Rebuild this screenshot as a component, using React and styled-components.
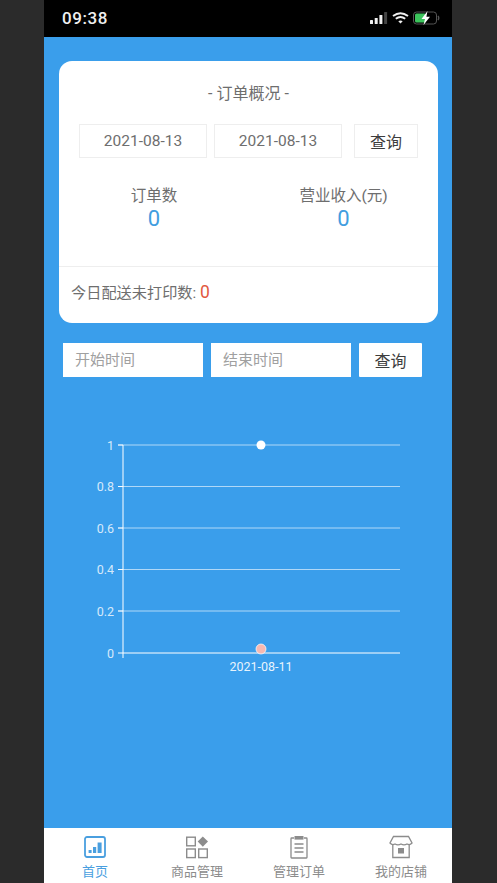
import React from "react";
import styled, { createGlobalStyle } from "styled-components";

const Global = createGlobalStyle`
  html, body { margin: 0; padding: 0; background: #2b2b2b; }
  body { font-family: Roboto, "Noto Sans CJK SC", sans-serif; }
  * { box-sizing: border-box; }
`;
const Stage = styled.div`
  width: 497px; height: 883px; background: #2b2b2b; overflow: hidden;
  display: flex; justify-content: center; padding-right: 1px;
`;
const Phone = styled.div`
  width: 408px; height: 883px; display: flex; flex-direction: column; background: #3a9eeb;
`;
const StatusBar = styled.div`
  height: 37px; background: #000; color: #f0f0f0; flex: none;
  display: flex; align-items: center; justify-content: space-between;
  padding: 0 12px 1px 18px;
`;
const Clock = styled.span`
  font-size: 17px; font-weight: 500; letter-spacing: 0.6px;
`;
const StatusIcons = styled.div`
  display: flex; align-items: center; gap: 4px;
`;
const Main = styled.main`
  flex: 1; padding: 24px 14px 0 15px; display: flex; flex-direction: column;
`;
const Card = styled.section`
  width: 379px; height: 262px; background: #fff; border-radius: 13px;
  display: flex; flex-direction: column;
`;
const Title = styled.h2`
  margin: 0; padding-top: 22px; height: 63px; text-align: center;
  font-size: 16px; line-height: 22px; font-weight: 400; color: #6e6e6e;
`;
const DateRow = styled.div`
  display: flex; padding-left: 20px;
`;
const DateBox = styled.div`
  width: 128px; height: 34px; border: 1px solid #eee; margin-right: 7px;
  display: flex; align-items: center; justify-content: center;
  font-size: 15.5px; color: #6e6e6e;
`;
const CardButton = styled.div`
  width: 64px; height: 34px; border: 1px solid #eee; margin-left: 5px; padding-bottom: 1px;
  display: flex; align-items: center; justify-content: center;
  font-size: 16px; color: #3d3d3d;
`;
const Stats = styled.div`
  display: grid; grid-template-columns: 190px 189px; padding-top: 27px; height: 108px;
`;
const Stat = styled.div`
  display: flex; flex-direction: column; align-items: center;
  font-size: 15.5px; line-height: 22px; color: #6e6e6e;
`;
const StatValue = styled.span`
  font-size: 22px; line-height: 23px; color: #419ddf;
`;
const Footer = styled.div`
  border-top: 1px solid #eee; flex: 1; padding: 14px 0 0 12px;
  font-size: 15.2px; line-height: 22px; color: #6e6e6e;
`;
const Alert = styled.span`
  font-size: 17.5px; color: #e2583e;
`;
const QueryRow = styled.div`
  display: flex; margin-top: 20px; padding-left: 4px;
`;
const TimeField = styled.div`
  width: 140px; height: 34px; background: #fff; margin-right: 8px; padding: 0 0 4px 12px;
  display: flex; align-items: center; font-size: 15px; color: #a0a0a0;
`;
const QueryButton = styled.div`
  width: 63px; height: 34px; background: #fff; border-radius: 1px;
  display: flex; align-items: center; justify-content: center;
  font-size: 16px; color: #3d3d3d;
`;
const Chart = styled.svg`
  display: block; margin: 49.5px 0 0 -15px; flex: none;
`;
const TabBar = styled.nav`
  height: 55px; flex: none; background: #fff; display: grid; grid-template-columns: repeat(4, 102px);
`;
const Tab = styled.div`
  display: flex; flex-direction: column; align-items: center; padding-top: 7px;
  color: ${p => (p.$active ? "#4a9fdf" : "#8c8c8c")};
  font-size: 13px; line-height: 18px;
`;
const TabIcon = styled.svg`
  display: block; margin-bottom: 4px; flex: none;
`;

const HomeIcon = () => (
  <TabIcon width="24" height="24" viewBox="0 0 24 24" fill="none">
    <rect x="2" y="2" width="20" height="20" rx="2" stroke="#4a9fdf" strokeWidth="1.8" />
    <rect x="5.6" y="15" width="3" height="3" fill="#4a9fdf" />
    <rect x="10" y="12" width="3.2" height="6" fill="#4a9fdf" />
    <rect x="14.6" y="7.5" width="4" height="10.5" fill="#4a9fdf" />
  </TabIcon>
);
const GoodsIcon = () => (
  <TabIcon width="24" height="24" viewBox="0 0 24 24" fill="none" stroke="#8c8c8c" strokeWidth="1.4">
    <rect x="1.7" y="2.2" width="8.6" height="8.6" />
    <rect x="1.7" y="14" width="8.6" height="8.6" />
    <rect x="13.7" y="14" width="8.6" height="8.6" />
    <path d="M17.8 1.5 L23 6.6 L17.8 11.7 L12.7 6.6 Z" fill="#8c8c8c" stroke="none" />
  </TabIcon>
);
const OrderIcon = () => (
  <TabIcon width="24" height="24" viewBox="0 0 24 24" fill="none" stroke="#8c8c8c" strokeWidth="1.3">
    <path d="M7 3 H4.6 Q4 3 4 3.7 V22.2 Q4 23 4.6 23 H19.4 Q20 23 20 22.2 V3.7 Q20 3 19.4 3 H17" />
    <rect x="7.5" y="1" width="9" height="3.6" fill="#8c8c8c" stroke="none" />
    <path d="M7.5 9 H16.5 M7.5 13 H16.5 M7.5 17 H16.5" strokeWidth="1.5" />
  </TabIcon>
);
const ShopIcon = () => (
  <TabIcon width="24" height="24" viewBox="0 0 24 24" fill="none" stroke="#8c8c8c" strokeWidth="1.3">
    <path d="M4.5 1.5 H19.5 L23 8 Q21 10.5 18 9 Q15 10.8 12 9 Q9 10.8 6 9 Q3 10.5 1 8 Z" />
    <path d="M3.8 10 V22.5 H20.2 V10" />
    <rect x="9" y="13" width="6" height="5.5" fill="#8c8c8c" stroke="none" />
  </TabIcon>
);

const ticks = [
  { label: "1", y: 18 },
  { label: "0.8", y: 59.5 },
  { label: "0.6", y: 101 },
  { label: "0.4", y: 142.5 },
  { label: "0.2", y: 184 },
];

export default function App() {
  return (
    <Stage>
      <Global />
      <Phone>
        <StatusBar>
          <Clock>09:38</Clock>
          <StatusIcons>
            <svg width="18" height="12" viewBox="0 0 18 12">
              <rect x="0" y="8" width="3" height="4" rx="0.6" fill="#f0f0f0" />
              <rect x="4.7" y="6" width="3" height="6" rx="0.6" fill="#f0f0f0" />
              <rect x="9.4" y="3" width="3" height="9" rx="0.6" fill="#f0f0f0" />
              <rect x="14.1" y="0" width="3" height="12" rx="0.6" fill="#444" />
            </svg>
            <svg width="17" height="12" viewBox="0 0 17 12" fill="none" stroke="#f0f0f0" strokeWidth="1.9">
              <path d="M1 4 Q8.5 -1.6 16 4" />
              <path d="M3.8 6.8 Q8.5 3.2 13.2 6.8" />
              <path d="M8.5 11.5 L6.3 9.3 Q8.5 7.7 10.7 9.3 Z" fill="#f0f0f0" stroke="none" />
            </svg>
            <svg width="27" height="14" viewBox="0 0 27 14" fill="none">
              <rect x="0.5" y="1" width="23" height="12" rx="3" stroke="#555" />
              <rect x="2" y="2.5" width="11" height="9" rx="1.5" fill="#3cc45c" />
              <path d="M25 5 Q26.5 7 25 9" stroke="#555" strokeWidth="1.4" />
              <path d="M14.5 0 L8.5 8 H12 L10.5 14 L17 5.8 H13.4 Z" fill="#fff" />
            </svg>
          </StatusIcons>
        </StatusBar>
        <Main>
          <Card>
            <Title>- 订单概况 -</Title>
            <DateRow>
              <DateBox>2021-08-13</DateBox>
              <DateBox>2021-08-13</DateBox>
              <CardButton>查询</CardButton>
            </DateRow>
            <Stats>
              <Stat>订单数<StatValue>0</StatValue></Stat>
              <Stat>营业收入(元)<StatValue>0</StatValue></Stat>
            </Stats>
            <Footer>今日配送未打印数: <Alert>0</Alert></Footer>
          </Card>
          <QueryRow>
            <TimeField>开始时间</TimeField>
            <TimeField>结束时间</TimeField>
            <QueryButton>查询</QueryButton>
          </QueryRow>
          <Chart width="408" height="290" viewBox="0 0 408 290">
            {ticks.map(t => (
              <g key={t.label}>
                <path d={`M74 ${t.y} H356`} stroke="#fff" strokeOpacity="0.6" strokeWidth="1" />
                <path d={`M74 ${t.y} H79`} stroke="#fff" strokeOpacity="0.9" strokeWidth="1" />
                <text x="70" y={t.y + 4.5} textAnchor="end" fontFamily="Roboto" fontSize="12.5" fill="#fff" fillOpacity="0.8">{t.label}</text>
              </g>
            ))}
            <path d="M74 226 H356" stroke="#fff" strokeWidth="1" />
            <text x="70" y="230.5" textAnchor="end" fontFamily="Roboto" fontSize="12.5" fill="#fff" fillOpacity="0.8">0</text>
            <path d="M79 18 V231" stroke="#fff" strokeWidth="1" />
            <circle cx="217" cy="18" r="4.5" fill="#fff" />
            <circle cx="217" cy="222" r="5" fill="#f7b9b1" stroke="#fff" strokeOpacity="0.7" strokeWidth="1" />
            <text x="217" y="244" textAnchor="middle" fontFamily="Roboto" fontSize="12.5" fill="#fff" fillOpacity="0.9">2021-08-11</text>
          </Chart>
        </Main>
        <TabBar>
          <Tab $active><HomeIcon />首页</Tab>
          <Tab><GoodsIcon />商品管理</Tab>
          <Tab><OrderIcon />管理订单</Tab>
          <Tab><ShopIcon />我的店铺</Tab>
        </TabBar>
      </Phone>
    </Stage>
  );
}
